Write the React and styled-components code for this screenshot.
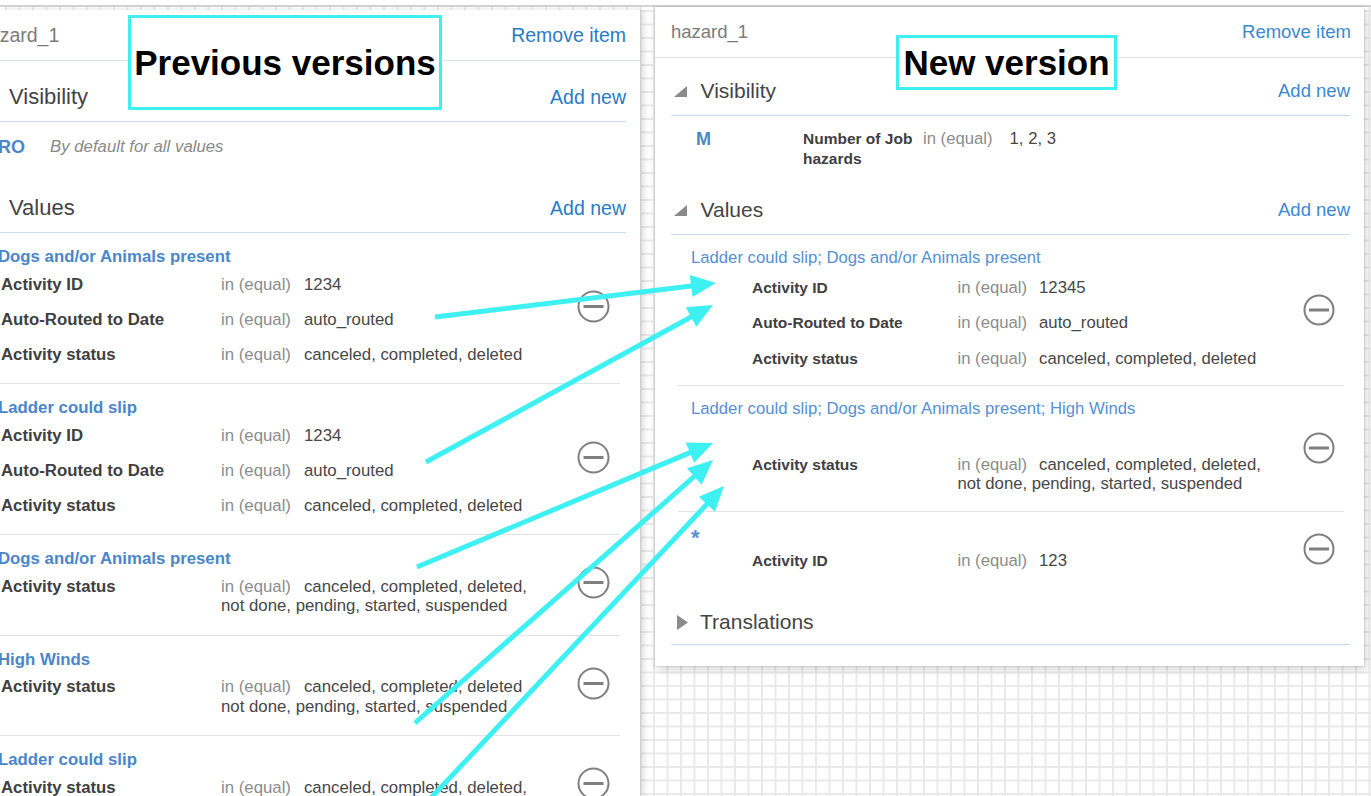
import React from 'react'
import styled, { createGlobalStyle } from 'styled-components'

const GlobalStyle = createGlobalStyle`
  * { box-sizing: border-box; }
  html, body { margin: 0; padding: 0; background: #fff; }
  body { font-family: "Liberation Sans", Arial, sans-serif; }
`

const Page = styled.div`
  position: relative;
  width: 1371px;
  height: 796px;
  overflow: hidden;
  background-color: #fff;
  background-image:
    linear-gradient(#e9e9e9 2px, transparent 2px),
    linear-gradient(90deg, #e9e9e9 2px, transparent 2px);
  background-size: 13.5px 13.5px;
  background-position: 5px 10px;
`

const TopRule = styled.div`
  height: 7px;
  background: #fff;
  border-bottom: 2px solid #d4d4d4;
`

const Columns = styled.div`
  display: flex;
  align-items: flex-start;
  gap: 14px;
`

/* ---------- old (left) panel ---------- */

const OldPanel = styled.section`
  width: 641px;
  height: 786px;
  margin-top: 3px;
  background: #fff;
  border-right: 1px solid #cfcfcf;
  box-shadow: 3px 0 6px rgba(0, 0, 0, 0.12);
  overflow: hidden;
`
const OldInner = styled.div`
  margin-left: -22px;
`

/* shared header bits */
const Header = styled.div`
  display: flex;
  justify-content: space-between;
  align-items: center;
  height: 51px;
  padding: ${p => p.$pad};
  border-bottom: 1px solid #dde2e8;
  font-size: ${p => p.$size}px;
`
const ItemName = styled.span`
  color: #7b7b7b;
`
const Link = styled.span`
  color: ${p => p.$color};
  font-size: ${p => p.$size}px;
`

const SectionHead = styled.div`
  display: flex;
  align-items: center;
  margin: ${p => p.$margin};
  padding: ${p => p.$pad};
  line-height: 26px;
  border-bottom: 1px solid #c8ddf3;
  font-size: ${p => p.$size}px;
  color: #444;
`
const SectionTitle = styled.span`
  flex: 1;
  margin-left: ${p => p.$gap || 0}px;
`
const Caret = styled.svg`
  display: block;
  flex: none;
`

const OldVisBody = styled.div`
  display: flex;
  align-items: center;
  height: 50px;
  padding-left: 20px;
`
const Mode = styled.span`
  font-weight: bold;
  font-size: 18px;
  color: #4b86c9;
`
const Note = styled.span`
  margin-left: 25px;
  font-style: italic;
  font-size: 16.8px;
  color: #8a8a8a;
`

const Groups = styled.div`
  margin: ${p => p.$margin};
`
const Group = styled.div`
  display: flex;
  align-items: center;
  padding: ${p => p.$pad};
  border-bottom: ${p => (p.$last ? 'none' : '1px solid #e0e4e8')};
`
const GroupBody = styled.div`
  flex: 1;
  min-width: 0;
`
const GroupTitle = styled.div`
  line-height: 20px;
  font-size: ${p => p.$size}px;
  font-weight: ${p => (p.$bold ? 'bold' : 'normal')};
  color: ${p => p.$color};
  padding-left: ${p => p.$indent}px;
  margin-bottom: ${p => p.$after}px;
`
const Star = styled.div`
  padding: 8px 0 0 13px;
  line-height: 10px;
  font-size: 22px;
  font-weight: bold;
  color: #5a8fd2;
`
const Spacer = styled.div`
  height: ${p => p.$h}px;
`
const Row = styled.div`
  display: grid;
  grid-template-columns: ${p => p.$cols};
  padding: ${p => p.$pad};
  line-height: 19.5px;
`
const Label = styled.span`
  font-weight: bold;
  font-size: ${p => p.$size}px;
  color: #404040;
`
const Cond = styled.span`
  font-size: ${p => p.$size}px;
  color: #474747;
`
const Op = styled.span`
  margin-right: ${p => p.$gap}px;
  color: #8c8c8c;
`
const RemoveBtn = styled.div`
  flex: none;
  display: flex;
  margin-bottom: ${p => p.$lift}px;
`

/* ---------- new (right) panel ---------- */

const NewPanel = styled.section`
  width: 709px;
  background: #fff;
  box-shadow: 0 0 0 1px rgba(0, 0, 0, 0.06), 2px 3px 8px rgba(0, 0, 0, 0.18);
  padding-bottom: 21px;
`
const NewVisBody = styled.div`
  display: grid;
  grid-template-columns: 107px 120px auto;
  padding: 13px 0 8px 41px;
  line-height: 20px;
`

/* ---------- annotations ---------- */

const Callout = styled.div`
  position: absolute;
  left: ${p => p.$x}px;
  top: ${p => p.$y}px;
  width: ${p => p.$w}px;
  height: ${p => p.$h}px;
  display: flex;
  align-items: center;
  justify-content: center;
  background: #fff;
  border: 3px solid #40f0f0;
  font-size: 35px;
  font-weight: bold;
  color: #000;
`
const ArrowLayer = styled.svg`
  position: absolute;
  left: 0;
  top: 0;
  pointer-events: none;
`

function MinusCircle({ size }) {
  const r = size / 2 - 1.5
  const c = size / 2
  return (
    <svg width={size} height={size} viewBox={`0 0 ${size} ${size}`}>
      <circle cx={c} cy={c} r={r} fill="none" stroke="#7f7f7f" strokeWidth="2" />
      <line x1={c - 10} y1={c} x2={c + 10} y2={c} stroke="#7f7f7f" strokeWidth="3" />
    </svg>
  )
}

function DownCaret() {
  return (
    <Caret width="13" height="11" viewBox="0 0 13 11">
      <polygon points="13,0 13,11 0,11" fill="#8a8a8a" />
    </Caret>
  )
}

function RightCaret() {
  return (
    <Caret width="12" height="15" viewBox="0 0 12 15">
      <polygon points="0,0 11,7.5 0,15" fill="#8a8a8a" />
    </Caret>
  )
}

const ALL = 'canceled, completed, deleted, not done, pending, started, suspended'

const oldGroups = [
  { title: 'Dogs and/or Animals present', rows: [['Activity ID', '1234'], ['Auto-Routed to Date', 'auto_routed'], ['Activity status', 'canceled, completed, deleted']] },
  { title: 'Ladder could slip', rows: [['Activity ID', '1234'], ['Auto-Routed to Date', 'auto_routed'], ['Activity status', 'canceled, completed, deleted']] },
  { title: 'Dogs and/or Animals present', rows: [['Activity status', ALL]] },
  { title: 'High Winds', rows: [['Activity status', 'canceled, completed, deleted not done, pending, started, suspended']] },
  { title: 'Ladder could slip', rows: [['Activity status', ALL]] },
]

const newGroups = [
  { title: 'Ladder could slip; Dogs and/or Animals present', rows: [['Activity ID', '12345'], ['Auto-Routed to Date', 'auto_routed'], ['Activity status', 'canceled, completed, deleted']] },
  { title: 'Ladder could slip; Dogs and/or Animals present; High Winds', gap: 26, rows: [['Activity status', ALL]] },
  { star: true, rows: [['Activity ID', '123']] },
]

const arrows = [
  [435, 317, 716, 283],
  [426, 462, 713, 305],
  [417, 567, 713, 443],
  [415, 723, 713, 460],
  [429, 800, 724, 486],
]

function Arrow({ x1, y1, x2, y2 }) {
  const dx = x2 - x1
  const dy = y2 - y1
  const len = Math.hypot(dx, dy)
  const ux = dx / len
  const uy = dy / len
  const L = 25
  const W = 11
  const bx = x2 - ux * L
  const by = y2 - uy * L
  const pts = [
    [x2, y2],
    [bx - uy * W, by + ux * W],
    [bx + uy * W, by - ux * W],
  ].map(p => p.join(',')).join(' ')
  return (
    <g>
      <line x1={x1} y1={y1} x2={bx + ux * 2} y2={by + uy * 2} stroke="#3ef0f2" strokeWidth="5" />
      <polygon points={pts} fill="#3ef0f2" />
    </g>
  )
}

export default function App() {
  return (
    <>
      <GlobalStyle />
      <Page>
        <TopRule />
        <Columns>
          <OldPanel>
            <OldInner>
              <Header $pad="0 14px 0 0" $size={19.5}>
                <ItemName>hazard_1</ItemName>
                <Link $color="#2a7bc4">Remove item</Link>
              </Header>

              <SectionHead $margin="0 14px 0 0" $pad="23px 0 11px 31px" $size={22}>
                <SectionTitle>Visibility</SectionTitle>
                <Link $color="#2a7bc4" $size={19.5}>Add new</Link>
              </SectionHead>
              <OldVisBody>
                <Mode>RO</Mode>
                <Note>By default for all values</Note>
              </OldVisBody>

              <SectionHead $margin="0 14px 0 0" $pad="23px 0 11px 31px" $size={22}>
                <SectionTitle>Values</SectionTitle>
                <Link $color="#2a7bc4" $size={19.5}>Add new</Link>
              </SectionHead>

              <Groups $margin="0 20px 0 20px">
                {oldGroups.map((g, i) => (
                  <Group key={i} $pad="14px 10px 11px 0">
                    <GroupBody>
                      <GroupTitle $size={16.8} $bold $color="#4a86c9" $indent={-2} $after={0}>
                        {g.title}
                      </GroupTitle>
                      {g.rows.map(([l, v], j) => (
                        <Row key={j} $cols="220px 320px" $pad="7.75px 0 7.75px 3px">
                          <Label $size={16.8}>{l}</Label>
                          <Cond $size={16.8}>
                            <Op $gap={13}>in (equal)</Op>
                            {v}
                          </Cond>
                        </Row>
                      ))}
                    </GroupBody>
                    <RemoveBtn $lift={7}>
                      <MinusCircle size={33} />
                    </RemoveBtn>
                  </Group>
                ))}
              </Groups>
            </OldInner>
          </OldPanel>

          <NewPanel>
            <Header $pad="0 13px 0 16px" $size={18.5}>
              <ItemName>hazard_1</ItemName>
              <Link $color="#3a89d2">Remove item</Link>
            </Header>

            <SectionHead $margin="0 14px 0 16px" $pad="20px 0 11px 2.5px" $size={21}>
              <DownCaret />
              <SectionTitle $gap={14}>Visibility</SectionTitle>
              <Link $color="#3a89d2" $size={18.5}>Add new</Link>
            </SectionHead>
            <NewVisBody>
              <Mode>M</Mode>
              <Label $size={15.5}>Number of Job hazards</Label>
              <Cond $size={16.7}>
                <Op $gap={17}>in (equal)</Op>
                1, 2, 3
              </Cond>
            </NewVisBody>

            <SectionHead $margin="0 14px 0 16px" $pad="20px 0 11px 2.5px" $size={21}>
              <DownCaret />
              <SectionTitle $gap={14}>Values</SectionTitle>
              <Link $color="#3a89d2" $size={18.5}>Add new</Link>
            </SectionHead>

            <Groups $margin="0 20px 0 23px">
              {newGroups.map((g, i) => (
                <Group key={i} $pad="13px 9px 9px 0" $last={i === newGroups.length - 1}>
                  <GroupBody>
                    {g.star ? (
                      <Star>*</Star>
                    ) : (
                      <GroupTitle $size={16.7} $color="#5590d6" $indent={13} $after={1.5}>
                        {g.title}
                      </GroupTitle>
                    )}
                    {g.gap && <Spacer $h={g.gap} />}
                    {g.rows.map(([l, v], j) => (
                      <Row key={j} $cols="205.5px 315px" $pad="8px 0 8px 74px">
                        <Label $size={15.5}>{l}</Label>
                        <Cond $size={16.7}>
                          <Op $gap={12}>in (equal)</Op>
                          {v}
                        </Cond>
                      </Row>
                    ))}
                  </GroupBody>
                  <RemoveBtn $lift={5}>
                    <MinusCircle size={32} />
                  </RemoveBtn>
                </Group>
              ))}
            </Groups>

            <SectionHead $margin="0 14px 0 16px" $pad="22px 0 9px 6px" $size={21}>
              <RightCaret />
              <SectionTitle $gap={11}>Translations</SectionTitle>
            </SectionHead>
          </NewPanel>
        </Columns>

        <Callout $x={128} $y={15} $w={314} $h={95}>Previous versions</Callout>
        <Callout $x={896} $y={35} $w={221} $h={55}>New version</Callout>

        <ArrowLayer width="1371" height="796" viewBox="0 0 1371 796">
          {arrows.map(([x1, y1, x2, y2], i) => (
            <Arrow key={i} x1={x1} y1={y1} x2={x2} y2={y2} />
          ))}
        </ArrowLayer>
      </Page>
    </>
  )
}
